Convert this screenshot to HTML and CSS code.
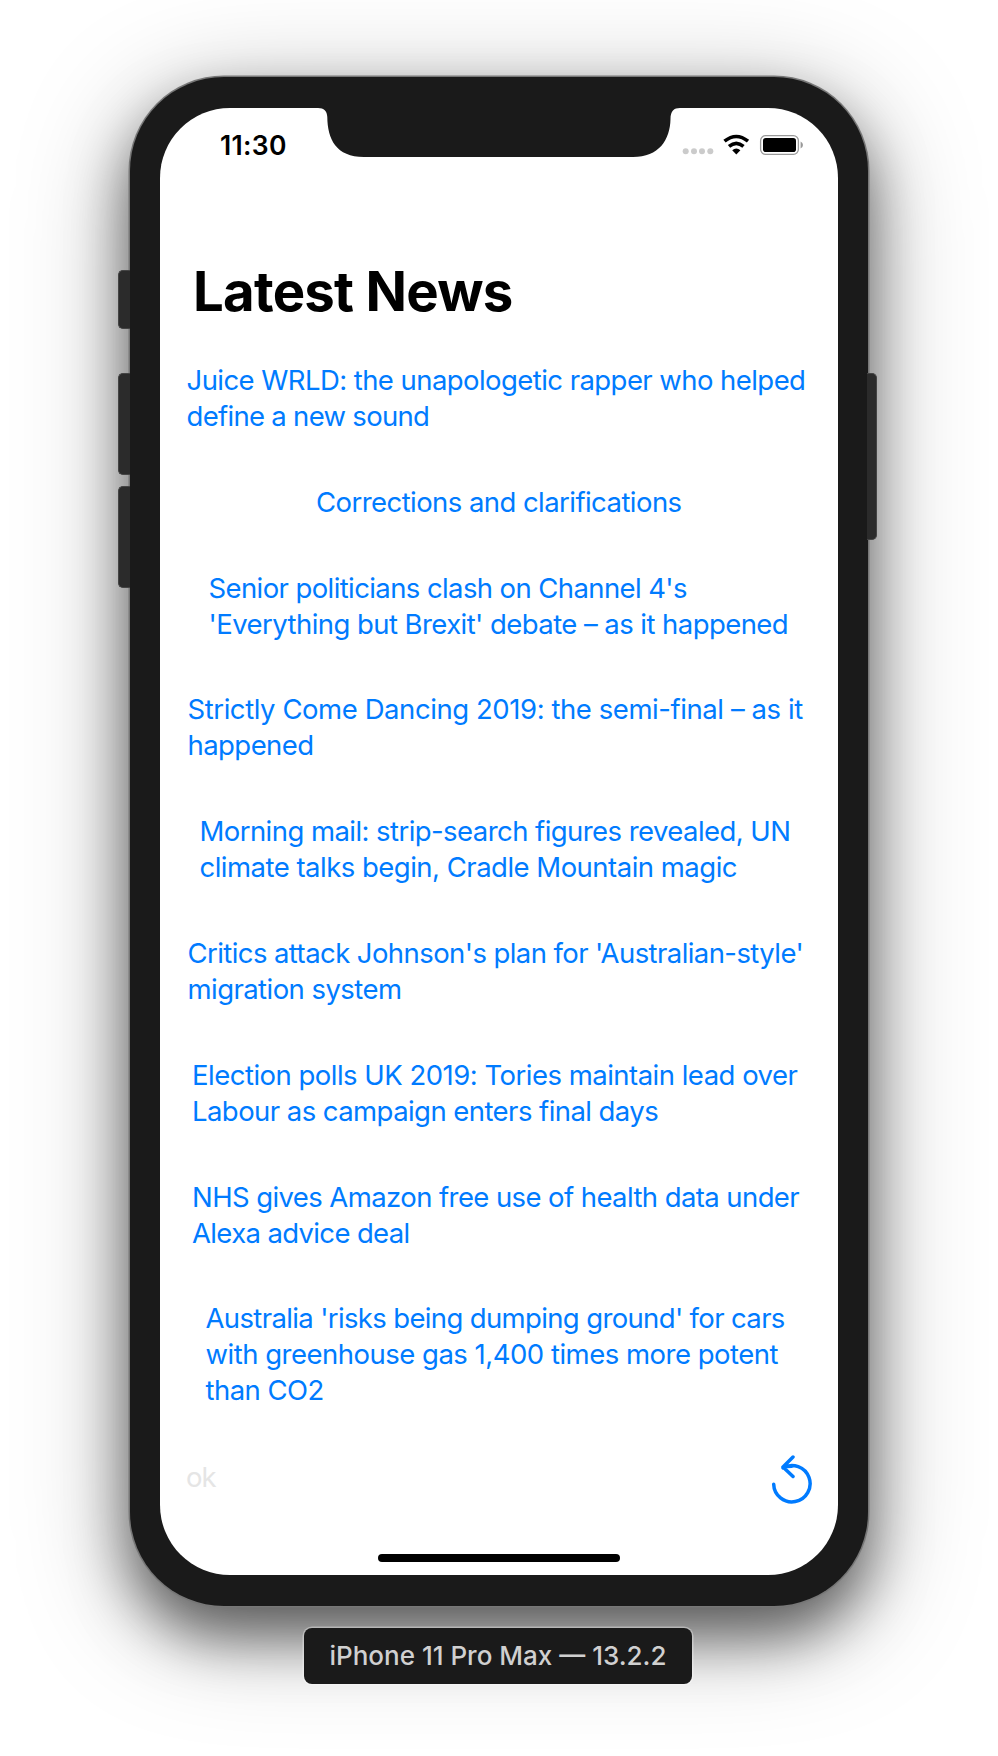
FILE: index.html
```html
<!DOCTYPE html>
<html lang="en">
<head>
<meta charset="utf-8">
<title>Latest News</title>
<link rel="stylesheet" href="styles.css">
</head>
<body>
<main class="stage">
  <div class="phone">
    <i class="key key-mute"></i><i class="key key-up"></i><i class="key key-down"></i><i class="key key-power"></i>
    <div class="screen">
      <svg class="notch" width="358" height="50" viewBox="0 0 358 50"><path d="M0 0C6 0 9 3 9.300 9C9.500 31 18 49 46 49H315C341 49 352 32 352.500 11C352.500 3 356 0 362 0V-1H0Z" transform="translate(-5 0)" fill="#1a1a1a"/></svg>
      <header class="status">
        <span class="time">11:30</span>
        <svg class="indicators" width="122" height="22" viewBox="0 0 122 22">
          <g fill="#cbcbcb"><circle cx="3.700" cy="17.300" r="3"/><circle cx="12" cy="17.300" r="3"/><circle cx="20" cy="17.300" r="3"/><circle cx="28.300" cy="17.300" r="3"/></g>
          <g fill="none" stroke="#000" stroke-width="3.600"><path d="M42.500 7.200Q54.300-2.200 66 7.200"/><path d="M47 12.400Q54.300 6.300 61.500 12.400"/></g>
          <path d="M50.200 16.300Q54.300 12.900 58.400 16.300L54.300 20.400Z"/>
          <rect x="78.600" y="1.700" width="37.800" height="18.600" rx="5" fill="none" stroke="#999" stroke-width="1.300"/>
          <rect x="81" y="4" width="33" height="14" rx="2.800"/>
          <path d="M118.600 7.500Q121 8.500 121 11T118.600 14.500Z" fill="#999"/>
        </svg>
      </header>
      <h1 class="title">Latest News</h1>
      <nav class="news">
        <a class="item i1"><span>Juice WRLD: the unapologetic rapper who helped</span><span>define a new sound</span></a>
        <a class="item i2"><span>Corrections and clarifications</span></a>
        <a class="item i3"><span>Senior politicians clash on Channel 4's</span><span>'Everything but Brexit' debate – as it happened</span></a>
        <a class="item i4"><span>Strictly Come Dancing 2019: the semi-final – as it</span><span>happened</span></a>
        <a class="item i5"><span>Morning mail: strip-search figures revealed, UN</span><span>climate talks begin, Cradle Mountain magic</span></a>
        <a class="item i6"><span>Critics attack Johnson's plan for 'Australian-style'</span><span>migration system</span></a>
        <a class="item i7"><span>Election polls UK 2019: Tories maintain lead over</span><span>Labour as campaign enters final days</span></a>
        <a class="item i8"><span>NHS gives Amazon free use of health data under</span><span>Alexa advice deal</span></a>
        <a class="item i9"><span>Australia 'risks being dumping ground' for cars</span><span>with greenhouse gas 1,400 times more potent</span><span>than CO2</span></a>
      </nav>
      <footer class="toolbar">
        <span class="ok">ok</span>
        <svg class="reload" width="42" height="50" viewBox="0 0 42 50" fill="none" stroke="#007bff" stroke-width="3.500" stroke-linecap="round" stroke-linejoin="round"><path d="M2.700 29.200A18.200 18.200 0 1 0 12 12.800Q14.500 11.200 20.800 11.200M12 12L22 2M12 12L22 21.500"/></svg>
      </footer>
      <div class="home"></div>
    </div>
  </div>
  <div class="caption">iPhone 11 Pro Max — 13.2.2</div>
</main>
</body>
</html>
```
FILE: styles.css
```css
* { box-sizing: border-box; }
body { margin: 0; background: #fff; font-family: Inter, "Liberation Sans", sans-serif; }
.stage { width: 998px; height: 1756px; padding-top: 77px; display: flex; flex-direction: column; align-items: center; overflow: hidden; }
.phone { position: relative; width: 738px; height: 1529px; padding: 31px 30px; border-radius: 94px; background: #1a1a1a; box-shadow: 0 0 0 1.5px #777, 0 30px 56px rgba(0,0,0,.52), 0 22px 110px rgba(0,0,0,.34); }
.key { position: absolute; left: -12px; width: 12px; background: #2b2b2b; border: 1px solid #444; border-right: 0; border-radius: 5px 0 0 5px; }
.key-mute { top: 193px; height: 59px; }
.key-up { top: 296px; height: 102px; }
.key-down { top: 409px; height: 102px; }
.key-power { left: auto; right: -9px; top: 296px; width: 10px; height: 167px; border: 1px solid #444; border-left: 0; border-radius: 0 5px 5px 0; }
.screen { position: relative; width: 678px; height: 1467px; border-radius: 70px; background: #fff; display: flex; flex-direction: column; }
.notch { position: absolute; left: 163px; top: 0; overflow: visible; }
.status { display: flex; justify-content: space-between; padding: 26px 34px 0 60px; height: 138px; }
.time { font-size: 26.500px; line-height: 23px; font-weight: 600; letter-spacing: .3px; }
.indicators { flex: none; }
.title { margin: 0 0 0 33px; height: 112px; font-size: 54.500px; line-height: 90px; font-weight: 700; letter-spacing: -.75px; white-space: nowrap; }
.news { display: flex; flex-direction: column; gap: 49.800px; margin-top: 4px; color: #007bff; font-size: 27.500px; line-height: 36px; letter-spacing: -.56px; }
.item { display: flex; flex-direction: column; align-items: flex-start; white-space: nowrap; }
.i1 { margin-left: 26.500px; }
.i2 { margin-left: 156px; }
.i3 { margin-left: 48.500px; }
.i4 { margin-left: 27.500px; }
.i5 { margin-left: 39.500px; }
.i6 { margin-left: 27.500px; }
.i7 { margin-left: 32px; }
.i8 { margin-left: 32px; }
.i9 { margin-left: 45.500px; }
.i1 span:nth-child(2) { letter-spacing: -.7px; }
.i3 span:nth-child(1) { letter-spacing: -.6px; }
.i4 span:nth-child(1) { letter-spacing: -.43px; }
.i5 span:nth-child(2), .i7 span:nth-child(1) { letter-spacing: -.51px; }
.i6 span:nth-child(1) { letter-spacing: -.58px; }
.i8 span:nth-child(1) { letter-spacing: -.59px; }
.i8 span:nth-child(2), .i9 span:nth-child(1) { letter-spacing: -.64px; }
.i9 span:nth-child(2) { letter-spacing: -.5px; }
.toolbar { display: flex; justify-content: space-between; align-items: flex-start; margin-top: auto; height: 99px; padding: 0 25px 0 26px; }
.ok { color: #e5e5e5; font-size: 27.500px; line-height: 44px; letter-spacing: -.9px; }
.reload { flex: none; }
.home { align-self: center; width: 242px; height: 8px; margin-bottom: 13px; border-radius: 4px; background: #000; }
.caption { position: relative; left: -1px; margin-top: 22px; width: 388px; height: 56px; border-radius: 8px; background: #1a1a1a; color: #d0d0d0; box-shadow: 0 0 0 1.5px rgba(255,255,255,.35); text-align: center; font-size: 26px; line-height: 56px; font-weight: 450; white-space: nowrap; }
```
